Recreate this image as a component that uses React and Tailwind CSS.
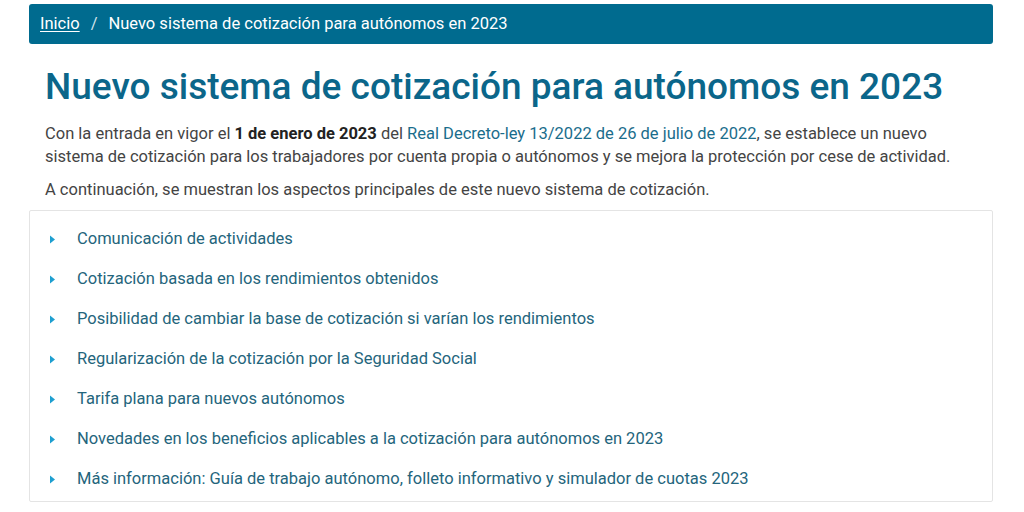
import React from 'react';

const items = [
  'Comunicación de actividades',
  'Cotización basada en los rendimientos obtenidos',
  'Posibilidad de cambiar la base de cotización si varían los rendimientos',
  'Regularización de la cotización por la Seguridad Social',
  'Tarifa plana para nuevos autónomos',
  'Novedades en los beneficios aplicables a la cotización para autónomos en 2023',
  'Más información: Guía de trabajo autónomo, folleto informativo y simulador de cuotas 2023',
];

const App = () => {
  return (
    <div className="min-h-screen bg-white pt-1 pl-[29px] pr-[31px]" style={{ fontFamily: 'Roboto, "Liberation Sans", sans-serif' }}>
      <nav className="h-10 bg-[#006b8f] rounded-[3px] flex items-center px-[11px] text-white text-[16.5px]">
        <a href="#" className="underline underline-offset-2">Inicio</a>
        <span className="mx-[11px] text-[#d0e4ec]">/</span>
        <span>Nuevo sistema de cotización para autónomos en 2023</span>
      </nav>

      <div className="px-4">
        <h1 className="mt-[21px] text-[37px] leading-[44px] font-medium text-[#0b668a]">
          Nuevo sistema de cotización para autónomos en 2023
        </h1>
        <p className="mt-[13px] max-w-[915px] text-[16.5px] leading-[23px] text-[#444]">
          Con la entrada en vigor el <strong className="font-bold text-[#222]">1 de enero de 2023</strong> del{' '}
          <a href="#" className="text-[#1a6d8c]">Real Decreto-ley 13/2022 de 26 de julio de 2022</a>, se establece un nuevo
          sistema de cotización para los trabajadores por cuenta propia o autónomos y se mejora la protección por cese de actividad.
        </p>
        <p className="mt-[10px] text-[16.5px] leading-[23px] text-[#444]">
          A continuación, se muestran los aspectos principales de este nuevo sistema de cotización.
        </p>
      </div>

      <div className="mt-[9px] border border-[#e4e4e4] rounded-[2px] pt-[8px] pb-[2px]">
        <ul>
          {items.map((item) => (
            <li key={item} className="h-10 flex items-center pl-[19px] text-[16.5px] text-[#24657c]">
              <svg width="7" height="9" viewBox="0 0 7 9" className="mr-[21px] shrink-0">
                <path d="M1 0.5 L6 4.5 L1 8.5 Z" fill="#1e9fd0" />
              </svg>
              <span>{item}</span>
            </li>
          ))}
        </ul>
      </div>
    </div>
  );
};

export default App;
